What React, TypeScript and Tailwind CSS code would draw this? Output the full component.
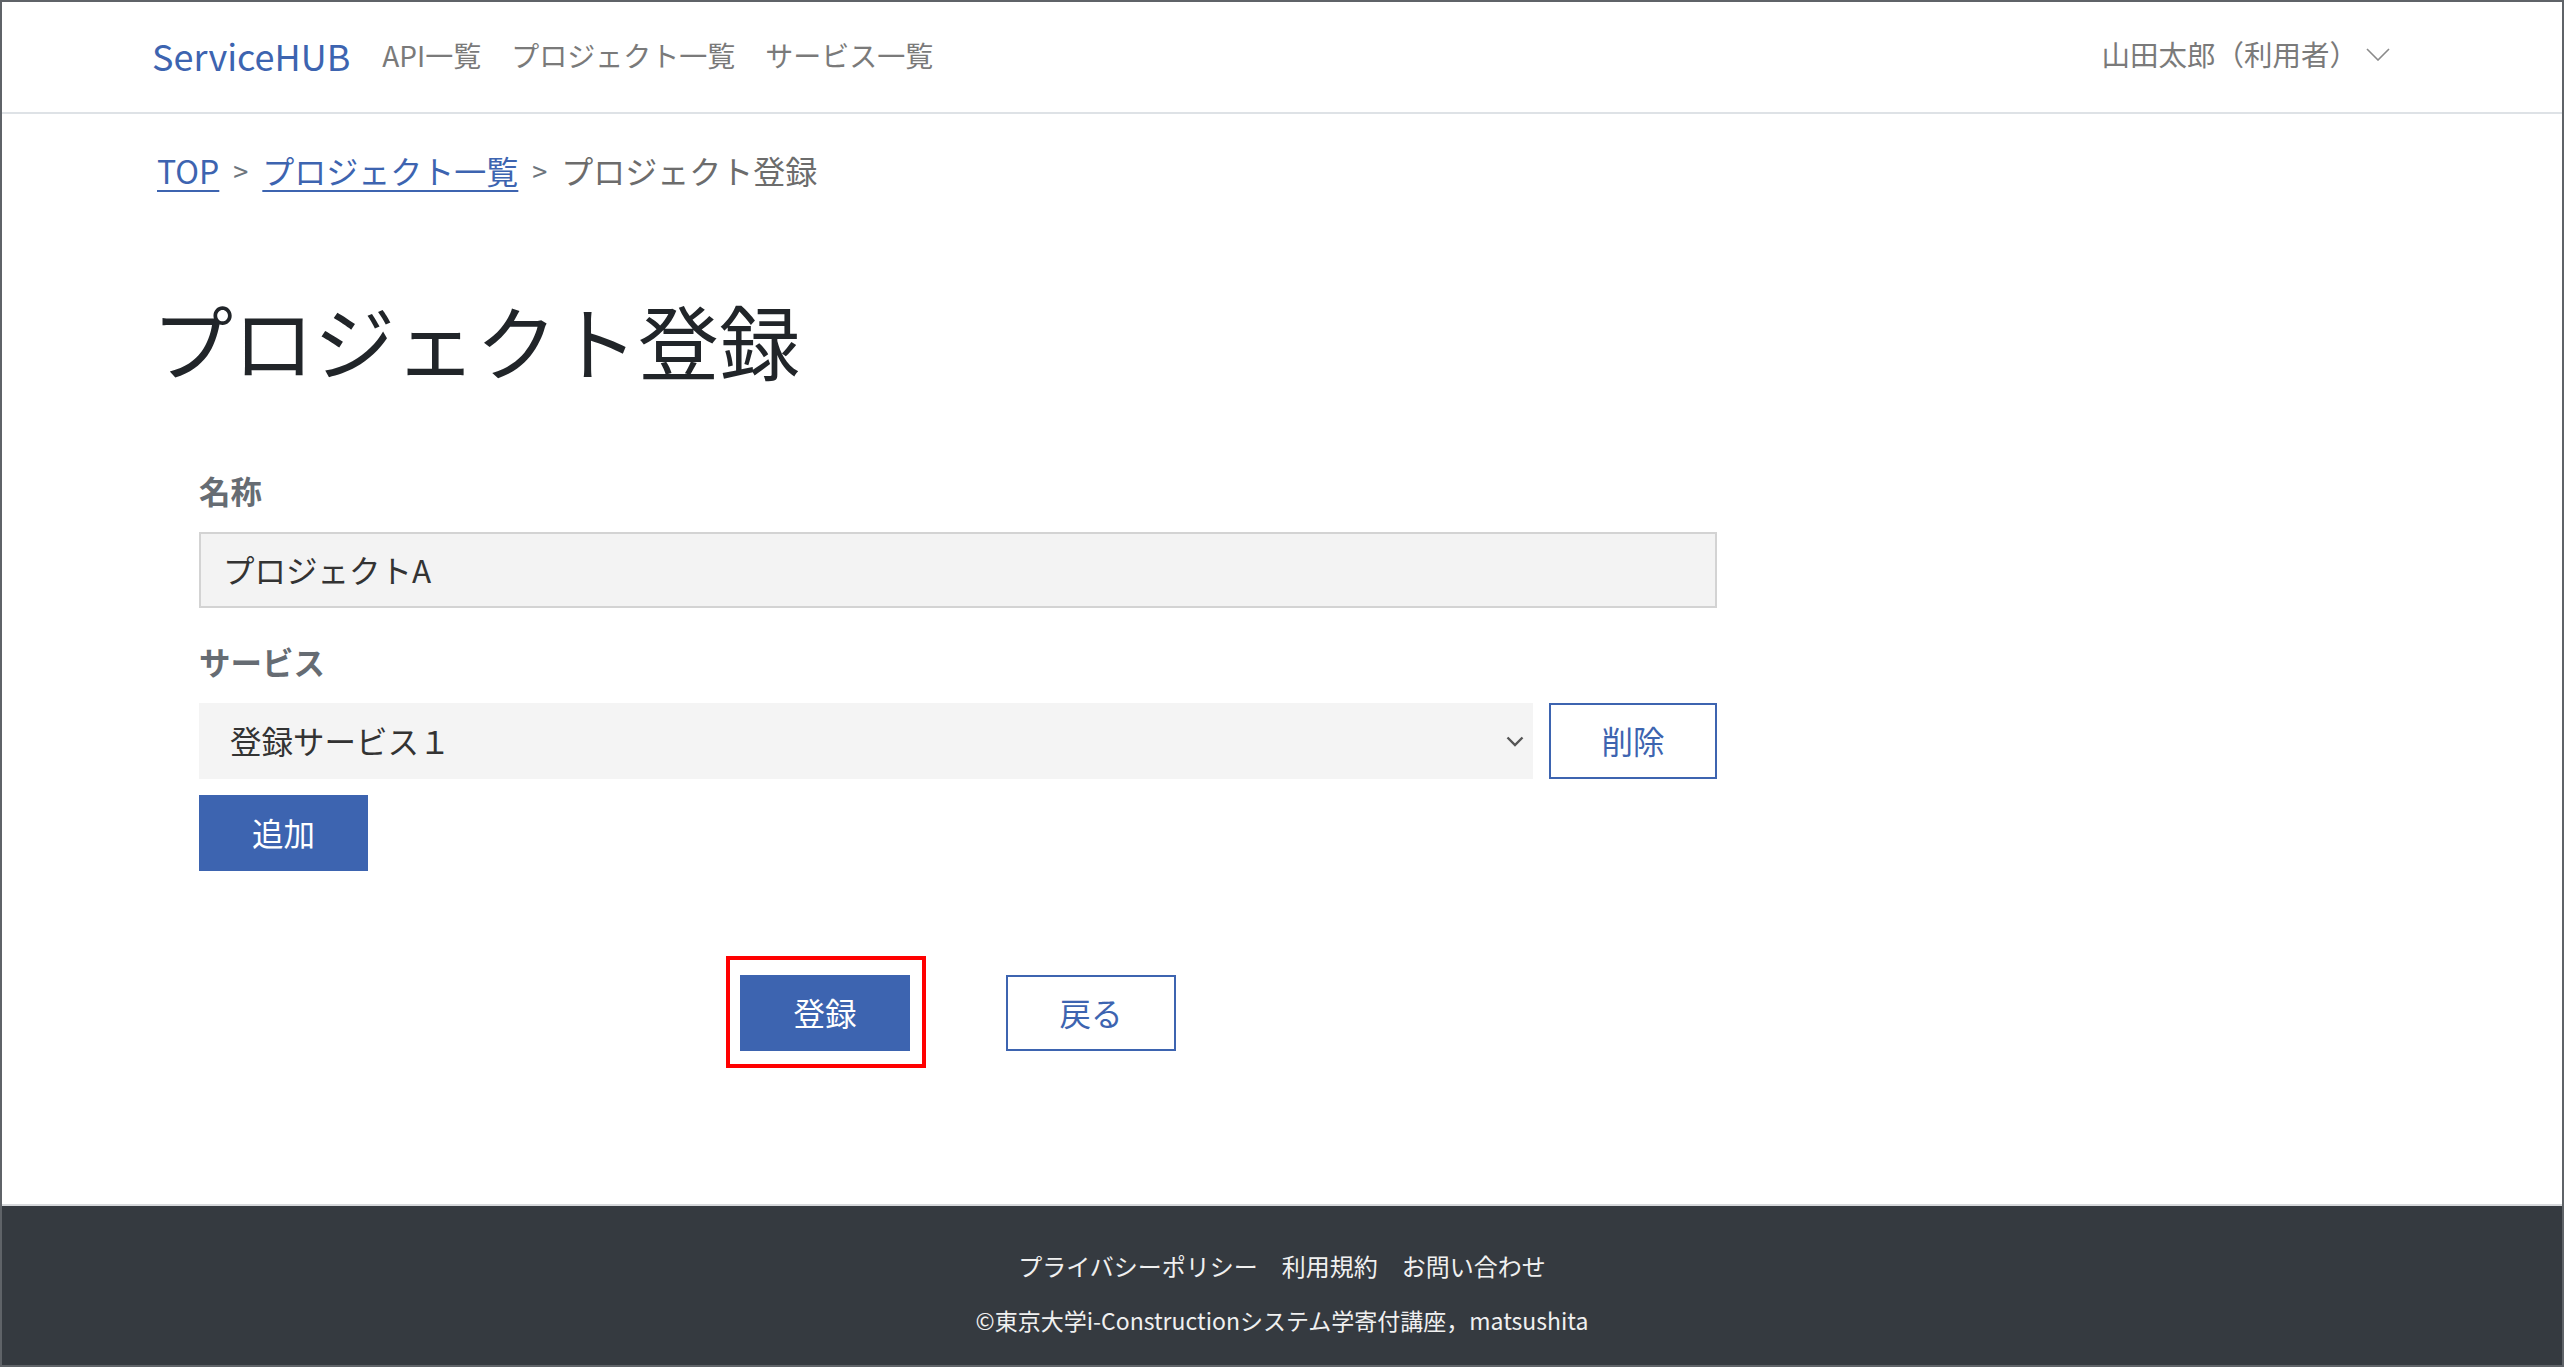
const font = "font-['Noto_Sans_CJK_JP','Noto_Sans',sans-serif]";

function Header() {
  return (
    <header className="flex h-[112px] shrink-0 items-center justify-between border-b-2 border-[#dee2e6] pb-[5px] pl-[150px] pr-[172px]">
      <div className="flex items-center">
        <a className="text-[36px] leading-none text-[#3d64b0]">ServiceHUB</a>
        <nav className="ml-[32px] flex items-center gap-[30px] text-[28px] leading-none text-[#7a7a7a]">
          <a>API一覧</a>
          <a>プロジェクト一覧</a>
          <a>サービス一覧</a>
        </nav>
      </div>
      <button className="flex items-center gap-[8px] text-[28.5px] leading-none text-[#7a7a7a]">
        <span>山田太郎（利用者）</span>
        <svg width="24" height="13" viewBox="0 0 24 13" fill="none">
          <path d="M1 1l11 11L23 1" stroke="#8a8a8a" strokeWidth="1.6" />
        </svg>
      </button>
    </header>
  );
}

function Breadcrumb() {
  return (
    <div className="mt-[32px] flex h-[48px] items-center text-[32px] leading-none">
      <a className="text-[#3d64b0] underline decoration-2 underline-offset-[6px]">TOP</a>
      <span className="mx-[14px] text-[27px] text-[#6c757d]">&gt;</span>
      <a className="text-[#3d64b0] underline decoration-2 underline-offset-[6px]">プロジェクト一覧</a>
      <span className="mx-[14px] text-[27px] text-[#6c757d]">&gt;</span>
      <span className="text-[#6c6c6c]">プロジェクト登録</span>
    </div>
  );
}

function Form() {
  return (
    <div className="ml-[42px] w-[1518px]">
      <div className="mt-[83px] flex h-[44px] items-center text-[31.5px] font-bold text-[#666c73]">名称</div>
      <div className="mt-[19px] flex h-[76px] items-center border-2 border-[#d3d3d3] bg-[#f3f3f3] px-[22px] text-[31.5px] text-[#333]">
        プロジェクトA
      </div>

      <div className="mt-[32px] flex h-[44px] items-center text-[31.5px] font-bold text-[#666c73]">サービス</div>
      <div className="mt-[19px] flex h-[76px] gap-[16px]">
        <div className="flex flex-1 items-center justify-between bg-[#f4f4f4] pl-[31px] pr-[9px] text-[31.5px] text-[#333]">
          <span>登録サービス１</span>
          <svg width="18" height="11" viewBox="0 0 18 11" fill="none">
            <path d="M1.5 1.5l7.5 7.5 7.5-7.5" stroke="#555" strokeWidth="2.4" />
          </svg>
        </div>
        <button className="w-[168px] border-2 border-[#3d64b0] bg-white text-[31.5px] text-[#3d64b0]">削除</button>
      </div>
      <button className="mt-[16px] h-[76px] w-[169px] bg-[#3d64b0] text-[31.5px] text-white">追加</button>

      <div className="mt-[104px] flex justify-center gap-[96px]">
        <div className="relative">
          <button className="h-[76px] w-[170px] bg-[#3d64b0] text-[31.5px] text-white">登録</button>
          <span className="pointer-events-none absolute -bottom-[17px] -left-[14px] -right-[16px] -top-[19px] border-[4px] border-[#ff0000]" />
        </div>
        <button className="h-[76px] w-[170px] border-2 border-[#3d64b0] bg-white text-[31.5px] text-[#3d64b0]">戻る</button>
      </div>
    </div>
  );
}

function Footer() {
  return (
    <footer className="flex h-[161px] shrink-0 flex-col items-center gap-[18px] border-t-2 border-[#d6d8db] bg-[#353a40] pt-[42px] text-[#f0f0f0]">
      <div className="flex h-[36px] items-center gap-[24px] text-[24px]">
        <a>プライバシーポリシー</a>
        <a>利用規約</a>
        <a>お問い合わせ</a>
      </div>
      <div className="flex h-[36px] items-center text-[23px]">©東京大学i-Constructionシステム学寄付講座，matsushita</div>
    </footer>
  );
}

export default function App() {
  return (
    <div className={`${font} flex h-[1367px] flex-col border-2 border-[#5f6368] bg-white`}>
      <Header />
      <main className="flex-1 pl-[155px]">
        <Breadcrumb />
        <h1 className="-ml-[5px] mt-[96px] flex h-[96px] items-center text-[81px] font-normal leading-none text-[#212529]">
          プロジェクト登録
        </h1>
        <Form />
      </main>
      <Footer />
    </div>
  );
}
